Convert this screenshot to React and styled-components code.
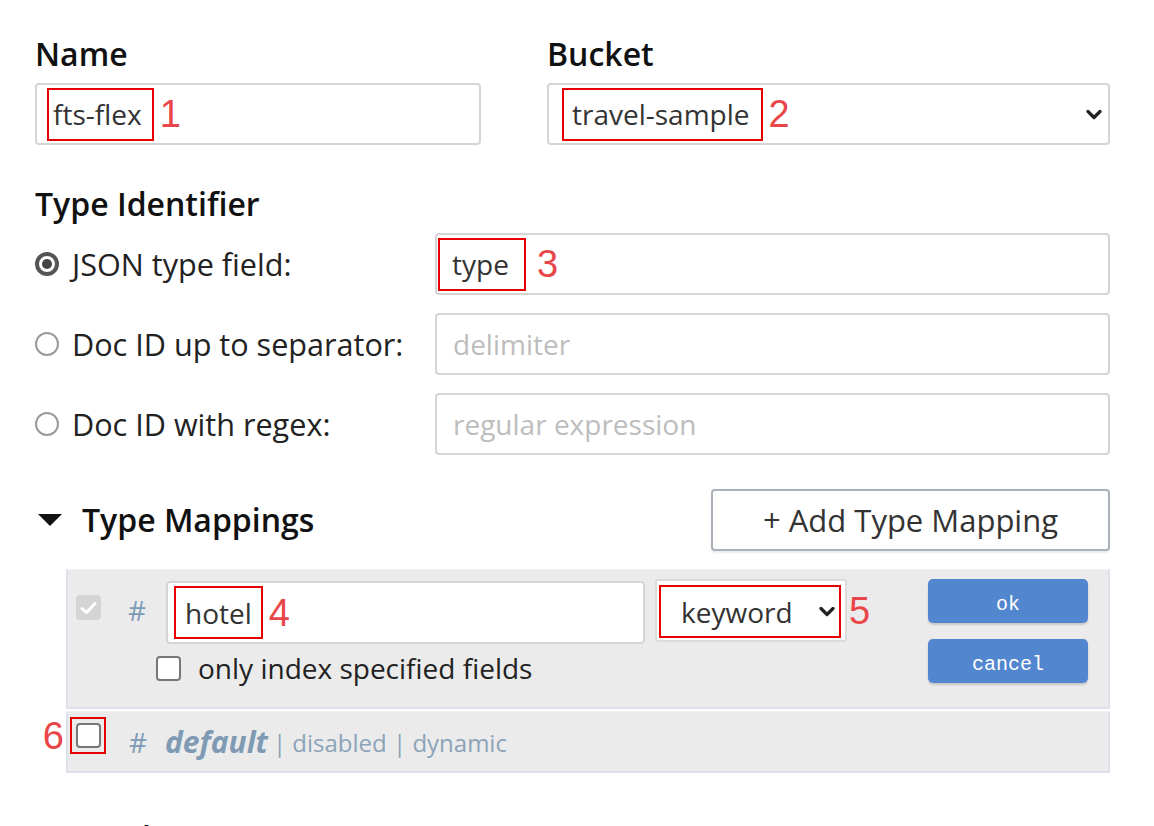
import React from "react";
import styled, { createGlobalStyle } from "styled-components";

const GlobalStyle = createGlobalStyle`
  body {
    margin: 0;
    background: #fff;
    font-family: "Open Sans", "DejaVu Sans", sans-serif;
    color: #222;
  }
`;

const Chevron = () => (
  <svg width="16" height="11" viewBox="0 0 16 11">
    <path d="M2 2.5 L8 8.5 L14 2.5" fill="none" stroke="#222" strokeWidth="3.2" strokeLinecap="round" strokeLinejoin="round" />
  </svg>
);

const Caret = () => (
  <svg width="24" height="12" viewBox="0 0 24 12"><path d="M0 0 H24 L12 12 Z" fill="#111" /></svg>
);

const App = () => {
  return (
    <>
      <GlobalStyle />
      <Page>
        <TopGrid>
          <div>
            <Label>Name</Label>
            <Box>
              <Mark $pl={4} $pr={10}>fts-flex</Mark>
              <Num>1</Num>
            </Box>
          </div>
          <div>
            <Label>Bucket</Label>
            <Box $pad={13}>
              <Mark $pl={8} $pr={11}>travel-sample</Mark>
              <Num>2</Num>
              <ChevronSlot><Chevron /></ChevronSlot>
            </Box>
          </div>
        </TopGrid>

        <Label $top={41}>Type Identifier</Label>
        <IdList>
          <IdRow>
            <RadioLabel><Radio $checked />JSON type field:</RadioLabel>
            <Box $pad={1}>
              <Mark $pl={12} $pr={15}>type</Mark>
              <Num $gap={11}>3</Num>
            </Box>
          </IdRow>
          <IdRow>
            <RadioLabel><Radio />Doc ID up to separator:</RadioLabel>
            <Box><Placeholder>delimiter</Placeholder></Box>
          </IdRow>
          <IdRow>
            <RadioLabel><Radio />Doc ID with regex:</RadioLabel>
            <Box><Placeholder>regular expression</Placeholder></Box>
          </IdRow>
        </IdList>

        <MappingsHeader>
          <Toggle>
            <Caret />
            Type Mappings
          </Toggle>
          <AddButton>+ Add Type Mapping</AddButton>
        </MappingsHeader>

        <MappingList>
          <MappingRow $editing>
            <CheckBox $disabled>
              <svg width="17" height="14" viewBox="0 0 17 14">
                <path d="M2 7.5 L6.5 11.5 L15 2.5" fill="none" stroke="#fff" strokeWidth="3" strokeLinecap="round" strokeLinejoin="round" />
              </svg>
            </CheckBox>
            <Hash>#</Hash>
            <EditMain>
              <EditInputs>
                <Box $width={479} $height={63} $pad={6}>
                  <Mark $pl={9} $pr={9}>hotel</Mark>
                  <Num>4</Num>
                </Box>
                <SelectBox>
                  <Mark $pl={20} $pr={4} $gap={26}>
                    keyword
                    <Chevron />
                  </Mark>
                  <Num $outside>5</Num>
                </SelectBox>
              </EditInputs>
              <OnlyRow>
                <CheckBox />
                only index specified fields
              </OnlyRow>
            </EditMain>
            <ButtonCol>
              <BlueButton>ok</BlueButton>
              <BlueButton>cancel</BlueButton>
            </ButtonCol>
          </MappingRow>

          <MappingRow>
            <CheckMark>
              <Num $left>6</Num>
              <CheckBox />
            </CheckMark>
            <Hash $gapLeft={23}>#</Hash>
            <TypeName>default</TypeName>
            <Meta>| disabled | dynamic</Meta>
          </MappingRow>
        </MappingList>

        <Toggle $top={47}>
          <Caret />
          Analyzers
        </Toggle>
      </Page>
    </>
  );
};

const Page = styled.div`
  padding: 36px 44px 0 35px;
  width: 1075px;
`;

const TopGrid = styled.div`
  display: grid;
  grid-template-columns: 446px 1fr;
  column-gap: 66px;
`;

const Label = styled.div`
  font-size: 32px;
  font-weight: 600;
  line-height: 36px;
  color: #111;
  margin-top: ${(p) => p.$top || 0}px;
  margin-bottom: 11px;
`;

const Box = styled.div`
  box-sizing: border-box;
  position: relative;
  display: flex;
  align-items: center;
  width: ${(p) => (p.$width ? `${p.$width}px` : "auto")};
  height: ${(p) => p.$height || 62}px;
  padding: 0 10px 0 ${(p) => (p.$pad !== undefined ? p.$pad : 10)}px;
  border: 2px solid #d5d5d5;
  border-radius: 4px;
  background: #fff;
  font-size: 28px;
  color: #333;
`;

const Mark = styled.span`
  box-sizing: border-box;
  display: inline-flex;
  align-items: center;
  gap: ${(p) => p.$gap || 0}px;
  height: 53px;
  padding: 0 ${(p) => p.$pr}px 0 ${(p) => p.$pl}px;
  border: 2px solid #e80000;
  line-height: 1;
`;

const Num = styled.span`
  font-family: "Liberation Sans", Arial, sans-serif;
  font-size: 38px;
  line-height: 1;
  color: #e9464a;
  margin-left: ${(p) => p.$gap || 6}px;
  ${(p) =>
    p.$outside &&
    `
    position: absolute;
    left: 100%;
    top: 50%;
    transform: translateY(-50%);
    margin-left: 4px;
  `}
  ${(p) =>
    p.$left &&
    `
    position: absolute;
    right: 100%;
    top: 50%;
    transform: translateY(-50%);
    margin-left: 0;
    margin-right: 8px;
  `}
`;

const ChevronSlot = styled.span`
  margin-left: auto;
  margin-right: -4px;
  display: flex;
`;

const Placeholder = styled.span`
  color: #bdbdbd;
  padding-left: 6px;
`;

const IdList = styled.div`
  display: flex;
  flex-direction: column;
  gap: 18px;
`;

const IdRow = styled.div`
  display: grid;
  grid-template-columns: 400px 1fr;
  align-items: center;
`;

const RadioLabel = styled.label`
  display: flex;
  align-items: center;
  gap: 13px;
  font-size: 30.6px;
  color: #222;
`;

const Radio = styled.span`
  box-sizing: border-box;
  width: 24px;
  height: 24px;
  border-radius: 50%;
  border: 2px solid ${(p) => (p.$checked ? "#555" : "#9a9a9a")};
  position: relative;
  flex: none;
  ${(p) =>
    p.$checked &&
    `
    border-width: 4px;
    &::after {
      content: "";
      position: absolute;
      inset: 3px;
      border-radius: 50%;
      background: #444;
    }
  `}
`;

const MappingsHeader = styled.div`
  display: flex;
  align-items: center;
  justify-content: space-between;
  margin-top: 34px;
`;

const Toggle = styled.div`
  display: flex;
  align-items: center;
  gap: 20px;
  padding-left: 3px;
  font-size: 32px;
  font-weight: 600;
  line-height: 36px;
  color: #111;
  margin-top: ${(p) => p.$top || 0}px;
`;

const AddButton = styled.button`
  box-sizing: border-box;
  width: 399px;
  height: 62px;
  border: 2px solid #a9b1bd;
  border-radius: 4px;
  background: #fff;
  font-family: inherit;
  font-size: 31px;
  color: #333;
  box-shadow: 0 2px 2px rgba(0, 0, 0, 0.08);
`;

const MappingList = styled.div`
  margin: 18px 0 0 31px;
  display: flex;
  flex-direction: column;
  gap: 2px;
`;

const MappingRow = styled.div`
  box-sizing: border-box;
  display: flex;
  align-items: ${(p) => (p.$editing ? "flex-start" : "center")};
  height: ${(p) => (p.$editing ? 140 : 62)}px;
  padding: ${(p) => (p.$editing ? "9px 20px 0 8px" : "0 20px 0 8px")};
  background: #ebebeb;
  border: 2px solid #dde2ea;
  border-top: 1px solid #f2f2f2;
`;

const CheckBox = styled.span`
  box-sizing: border-box;
  flex: none;
  width: 25px;
  height: 25px;
  border-radius: 4px;
  display: flex;
  align-items: center;
  justify-content: center;
  border: 2px solid ${(p) => (p.$disabled ? "#d4d4d4" : "#777")};
  background: ${(p) => (p.$disabled ? "#d4d4d4" : "#fff")};
  margin-top: ${(p) => (p.$disabled ? "16px" : "0")};
`;

const CheckMark = styled.span`
  box-sizing: border-box;
  position: relative;
  display: flex;
  align-items: center;
  justify-content: center;
  width: 36px;
  height: 37px;
  margin: -12px 0 0 -6px;
  border: 2px solid #e80000;
`;

const Hash = styled.span`
  width: 20px;
  margin: 0 16px 0 ${(p) => p.$gapLeft || 27}px;
  font-size: 28px;
  line-height: 62px;
  color: #7d9bb7;
  flex: none;
`;

const EditMain = styled.div`
  display: flex;
  flex-direction: column;
  margin-left: 2px;
`;

const EditInputs = styled.div`
  display: flex;
  align-items: flex-start;
  gap: 10px;
  padding-top: 2px;
`;

const SelectBox = styled.div`
  box-sizing: border-box;
  position: relative;
  width: 192px;
  height: 63px;
  margin-top: -2px;
  padding: 4px 2px;
  border: 2px solid #dcdcdc;
  border-radius: 3px;
  background: #fff;
  font-size: 28px;
  color: #333;
  display: flex;
`;

const OnlyRow = styled.div`
  display: flex;
  align-items: center;
  gap: 17px;
  margin: 4px 0 0 -10px;
  height: 40px;
  font-size: 28px;
  color: #222;
`;

const ButtonCol = styled.div`
  margin-left: auto;
  display: flex;
  flex-direction: column;
  gap: 16px;
`;

const BlueButton = styled.button`
  width: 160px;
  height: 44px;
  padding: 6px 0 0;
  border: none;
  border-radius: 5px;
  background: #5286cf;
  color: #fff;
  font-family: "Liberation Mono", "Courier New", monospace;
  font-size: 20px;
  box-shadow: 0 2px 2px rgba(0, 0, 0, 0.15);
`;

const TypeName = styled.span`
  font-size: 30px;
  font-weight: 700;
  font-style: italic;
  color: #7f9ab3;
  margin-right: 5px;
`;

const Meta = styled.span`
  font-size: 24px;
  color: #8ca3b8;
  padding-top: 2px;
`;

export default App;
